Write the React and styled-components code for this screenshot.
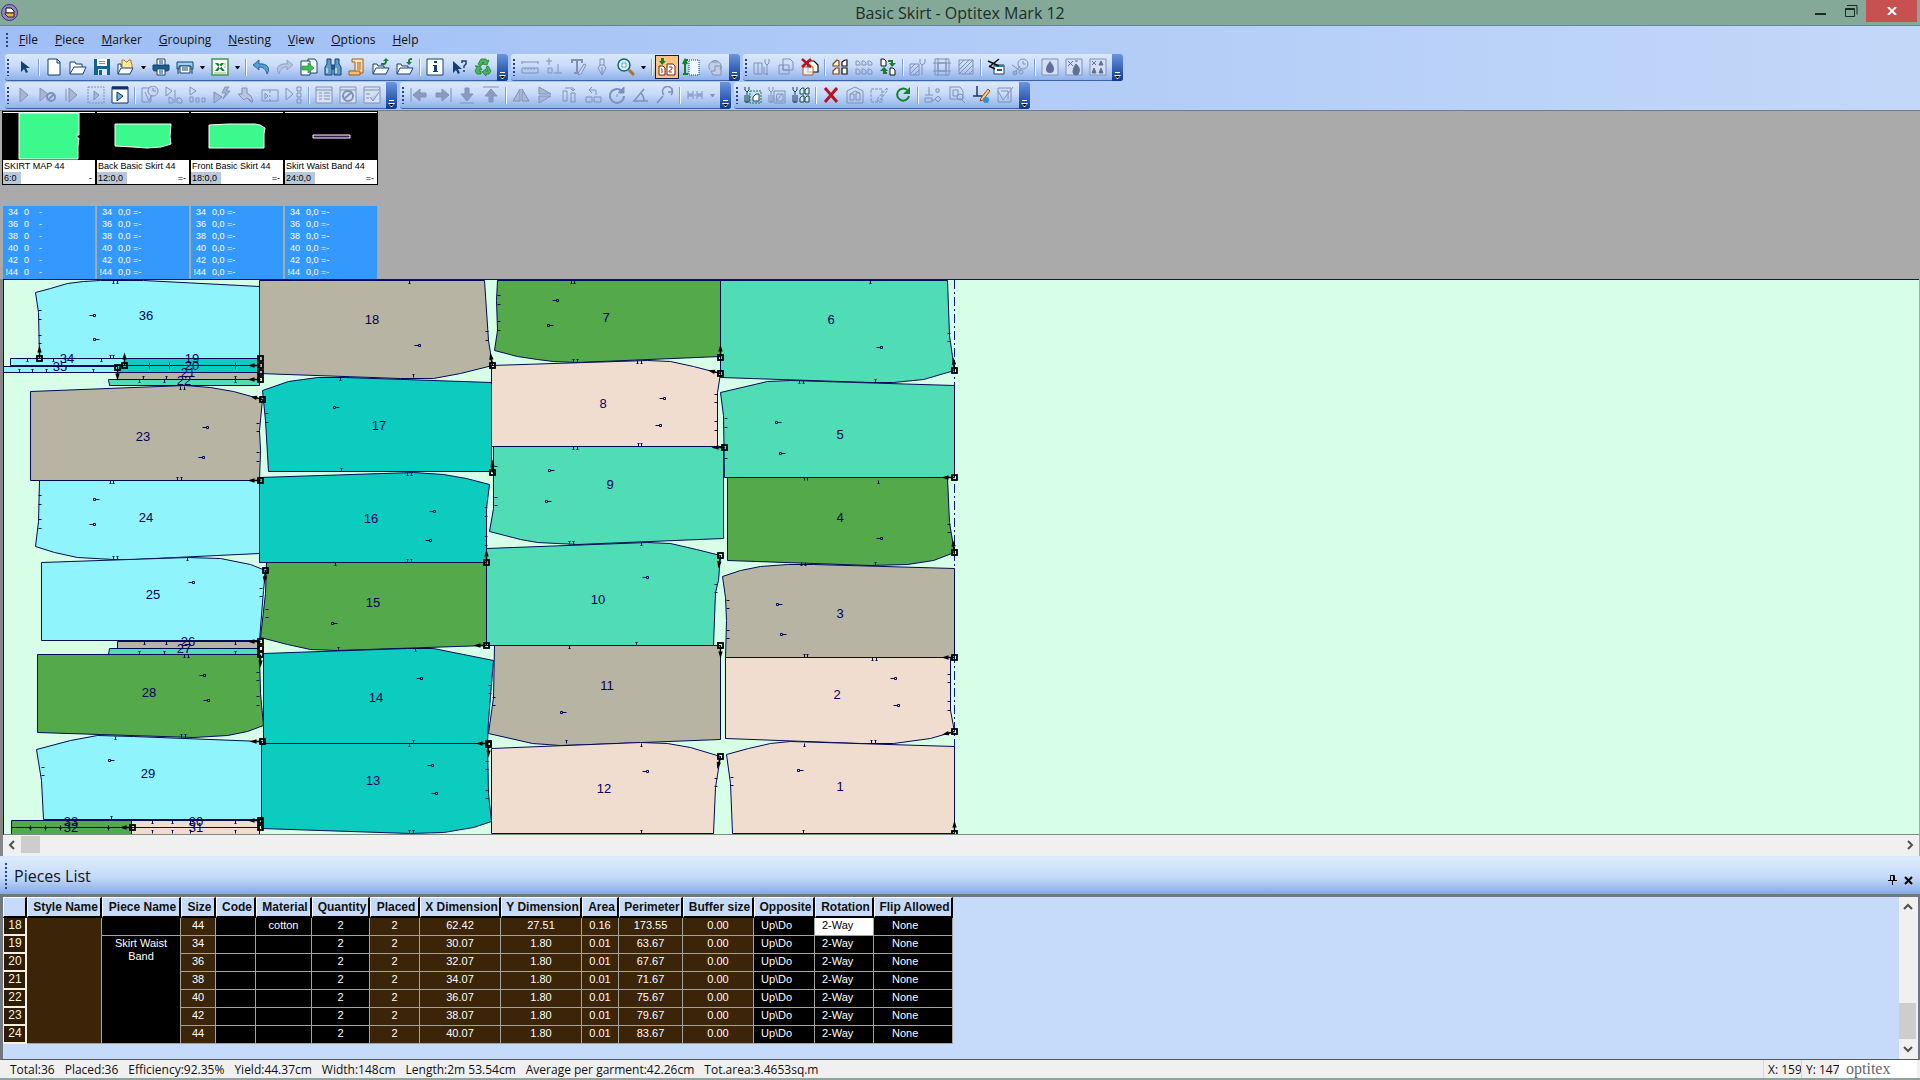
import React from 'react';
import styled, { createGlobalStyle, css } from 'styled-components';

const GlobalStyle = createGlobalStyle`
  * {
    box-sizing: border-box;
  }

  body {
    margin: 0;
    font-family: 'Open Sans', 'Noto Sans', sans-serif;
    color: #111;
  }

  button {
    padding: 0;
    border: none;
    background: transparent;
    color: inherit;
    font: inherit;
  }
`;

const Window = styled.div`
  display: flex;
  flex-direction: column;
  height: 100vh;
  overflow: hidden;
  background: #aaaaaa;
`;

/* Title bar */

const TitleBar = styled.header`
  display: grid;
  grid-template-columns: 1fr auto 1fr;
  flex: none;
  height: 26px;
  background: #85a998;
  border-bottom: 1px solid #62869a;
`;

const AppLogo = styled.svg`
  margin: 4px 0 0 1px;
`;

const Title = styled.h1`
  margin: 0;
  font-size: 16px;
  font-weight: 400;
  line-height: 26px;
  color: #1e2c28;
`;

const WindowButtons = styled.div`
  display: flex;
  justify-content: flex-end;
  padding-right: 3px;
`;

const WindowButton = styled.button`
  display: flex;
  align-items: center;
  justify-content: center;
  width: ${p => (p.$close ? 51 : 30)}px;
  height: 22px;
  color: ${p => (p.$close ? '#fff' : '#1c2a26')};
  background: ${p => (p.$close ? '#c75050' : 'transparent')};
`;

/* Menu and toolbars */

const Bars = styled.div`
  flex: none;
  background: linear-gradient(to right, #9ebef5 0%, #b0cbf7 50%, #c3d8f9 100%);
  border-bottom: 1px solid #77797f;
`;

const Menu = styled.nav`
  display: flex;
  align-items: center;
  gap: 1px;
  height: 28px;
  padding-left: 5px;
`;

const MenuItem = styled.button`
  padding: 0 8px;
  font-size: 12px;
  line-height: 24px;
`;

const Grip = styled.span`
  flex: none;
  width: 3px;
  height: ${p => p.$height || 17}px;
  margin: 0 ${p => p.$gap || 2}px;
  background: repeating-linear-gradient(#27438a 0 2px, transparent 2px 4px);
  background-size: 2px 100%;
  background-repeat: no-repeat;
`;

const ToolRow = styled.div`
  display: flex;
  gap: 3px;
  height: 28px;
  padding-left: 5px;
`;

const Toolbar = styled.div`
  display: flex;
  align-items: center;
  height: 27px;
  border-bottom: 1px solid #3b61a8;
  border-radius: 3px;
  background: linear-gradient(#dbe8fc 0%, #c8dbf9 45%, #8fb1ea 100%);
`;

const ToolButton = styled.button`
  display: flex;
  align-items: center;
  justify-content: center;
  width: 24px;
  height: 24px;
  color: #8090b8;

  ${p =>
    p.$active &&
    css`
      border: 1px solid #101a50;
      background: #fcc583;
    `}
`;

const Drop = styled.button`
  display: flex;
  align-items: center;
  justify-content: center;
  width: 11px;
  height: 24px;
  color: ${p => (p.disabled ? '#8090b8' : '#000')};
`;

const Separator = styled.span`
  width: 6px;
  height: 17px;
  background: linear-gradient(to right, #7f9fd8 1px, #f4f8ff 1px) center / 2px 100% no-repeat;
`;

const Overflow = styled.button`
  display: flex;
  align-items: flex-end;
  justify-content: center;
  width: 11px;
  height: 27px;
  margin-left: 2px;
  padding-bottom: 2px;
  border-radius: 0 3px 3px 0;
  background: linear-gradient(#6b95e0, #0b3a92);
  align-self: flex-start;
`;

/* Piece bar */

const PieceBar = styled.section`
  display: flex;
  flex: none;
  height: 168px;
  padding: 0 2px;
`;

const PieceColumn = styled.div`
  display: flex;
  flex-direction: column;
  justify-content: space-between;
  width: 94px;
  font-family: 'Liberation Sans', Arial, sans-serif;
  font-size: 9px;
  line-height: 12px;
`;

const PieceCard = styled.button`
  display: block;
  width: 94px;
  border: 1px solid #000;
  background: #fff;
  text-align: left;
  color: #000;
`;

const Thumb = styled.svg`
  display: block;
  border-top: 1px solid #fff;
  background: #000;
`;

const PieceTitle = styled.div`
  height: 12px;
  padding-left: 1px;
  white-space: nowrap;
`;

const PieceCount = styled.div`
  display: flex;
  justify-content: space-between;
  height: 12px;
  padding-right: 3px;

  span:first-child {
    padding: 0 4px 0 1px;
    background: #b9c8d9;
  }
`;

const SizeList = styled.ul`
  width: 92px;
  margin: 0 0 0 1px;
  padding: 0 0 1px;
  list-style: none;
  background: #3399ff;
  color: #fff;
`;

const SizeItem = styled.li`
  display: grid;
  grid-template-columns: 21px 15px auto;
  white-space: nowrap;

  span:first-child {
    padding-right: 6px;
    text-align: right;
  }
`;

/* Marker table */

const Table = styled.main`
  display: flex;
  flex-direction: column;
  flex: 1;
  min-height: 0;
  margin-right: 1px;
  border-left: 3px solid #85858a;
`;

const Canvas = styled.div`
  flex: 1;
  min-height: 0;
  overflow: hidden;
  border-left: 1px solid #16163c;
  border-top: 1px solid #16163c;
  border-bottom: 1px solid #7c8a85;
  background: #d7ffe7;

  svg {
    display: block;
    font-family: 'Liberation Sans', Arial, sans-serif;
    font-size: 13px;
  }
`;

const ScrollTrack = styled.div`
  display: flex;
  flex: none;
  flex-direction: ${p => (p.$vertical ? 'column' : 'row')};
  justify-content: space-between;
  width: ${p => (p.$vertical ? '19px' : 'auto')};
  height: ${p => (p.$vertical ? 'auto' : '21px')};
  padding: ${p => (p.$vertical ? '0 2px 1px 0' : '0 1px 2px 0')};
  background: #f0f0f0;
`;

const ScrollButton = styled.button`
  display: flex;
  align-items: center;
  justify-content: center;
  width: 17px;
  height: 19px;
  color: #505050;
`;

const ScrollThumb = styled.div`
  width: ${p => (p.$vertical ? 17 : 19)}px;
  height: ${p => (p.$vertical ? 36 : 17)}px;
  margin: ${p => (p.$vertical ? 'auto 0 0' : '1px auto 0 1px')};
  background: #cdcdcd;
`;

/* Pieces list */

const PanelHeader = styled.div`
  display: flex;
  align-items: center;
  flex: none;
  height: 38px;
  padding-right: 4px;
  border-top: 2px solid #dbe8fc;
  background: linear-gradient(#dcebfd 0%, #c2d9f8 55%, #86a9e4 100%);
  color: #14142a;

  h2 {
    flex: 1;
    margin: 0;
    padding-left: 1px;
    font-size: 16px;
    font-weight: 400;
  }
`;

const PanelButton = styled.button`
  width: 16px;
  height: 16px;
`;

const PanelBody = styled.section`
  display: flex;
  justify-content: space-between;
  flex: none;
  height: 166px;
  border-top: 3px solid #72767e;
  border-left: 3px solid #72767e;
  border-right: 2px solid #72767e;
  border-bottom: 1px solid #55575c;
  background: #c6dbf9;
`;

const List = styled.table`
  align-self: flex-start;
  width: 950px;
  table-layout: fixed;
  border-collapse: separate;
  border-spacing: 0;
  font-family: 'Liberation Sans', Arial, sans-serif;
`;

const HeadCell = styled.th`
  height: 21px;
  padding: 0 0 0 3px;
  border: solid;
  border-width: 1px 2px 2px 1px;
  border-color: #fff #000 #000 #fff;
  background: #c6dbf9;
  font-size: 12px;
  font-weight: 700;
  line-height: 18px;
  white-space: nowrap;
`;

const RowHead = styled.th`
  height: 18px;
  padding: 0;
  border: 1px solid #f8f0dc;
  border-width: 0 1px 1px;
  box-shadow: inset -1px -1px #f8f0dc;
  background: #2c1c08;
  color: #fff3d6;
  font-size: 12px;
  font-weight: 400;
  line-height: 15px;
  vertical-align: top;
`;

const Cell = styled.td`
  height: 18px;
  padding: 1px ${p => (p.$indent ? 0 : 3)}px 1px ${p => p.$indent || 3}px;
  border-right: 1px solid #a5a39e;
  border-bottom: 1px solid #a5a39e;
  background: ${p => (p.$selected ? '#fff' : p.$brown ? '#3b2407' : '#000')};
  color: ${p => (p.$selected ? '#000' : '#fff')};
  font-size: 11px;
  line-height: 13px;
  text-align: ${p => (p.$indent ? 'left' : 'center')};
  vertical-align: top;
`;

const StatusBar = styled.footer`
  display: flex;
  align-items: stretch;
  flex: none;
  height: 20px;
  padding-left: 10px;
  border-bottom: 2px solid #8fa39c;
  background: #f0f0f0;
  font-size: 12px;
  line-height: 20px;
  white-space: nowrap;
`;

const Totals = styled.div`
  display: flex;
  flex: 1;
  gap: 10px;
`;

const Coordinate = styled.span`
  width: 38px;
  padding-left: 4px;
  overflow: hidden;
  border-left: 1px solid #d8d8d8;
`;

const Brand = styled.span`
  width: 78px;
  margin-right: 3px;
  padding-left: 7px;
  background: #fff;
  color: #666;
  font-family: 'Liberation Serif', serif;
  font-size: 16px;
  line-height: 17px;
`;

const NAVY = '#14406f';
const GREEN = '#168030';

// 18 x 18 toolbar glyphs, greyed ones inherit the button colour
const icons = {
  pointer: <path d="M6 3v11l3-3 2 4 2-1-2-4h4z" fill={NAVY} stroke="none" />,
  newFile: <path d="M3 1h9l3 3v13H3zM12 1v4h3" fill="#fff" stroke={NAVY} />,
  open: (
    <g stroke={NAVY} fill="#fff">
      <path d="M1 16V4h5l1 2h6v3" />
      <path d="M1 16l4-7h12l-3 7z" />
    </g>
  ),
  save: (
    <g stroke="none">
      <path d="M1 1h16v16H1z" fill="#16608f" />
      <path d="M4 1h10v7H4z" fill="#fff" />
      <path d="M6 3h6v1H6zM6 5h6v1H6z" fill="#8090a0" />
      <path d="M5 11h9v6H5z" fill="#d7ecff" />
      <path d="M6 12h3v5H6z" fill="#16608f" />
    </g>
  ),
  openStyle: (
    <g>
      <path d="M5 11V2h2l2 2 1 0 2-2h2v3l1 1v5z" fill="#ffe9a0" stroke="#b07a18" />
      <path d="M1 16V6h3v3M1 16l3-6h12l-3 6z" fill="#fff" stroke={NAVY} />
    </g>
  ),
  print: (
    <g stroke={NAVY}>
      <path d="M1 7h16v5l-2 1H3l-2-1z" fill="#16608f" />
      <path d="M5 1h8v6H5zM5 11h8v6H5z" fill="#fff" />
      <path d="M7 3h4M7 5h4M7 13h4M7 15h4" />
    </g>
  ),
  plotter: (
    <g stroke={NAVY}>
      <path d="M1 4h16v7h-2V8H3v3H1z" fill="#9ed0f4" />
      <path d="M4 8h10v7H4z" fill="#fff" />
      <path d="M6 10h6M6 12h6M2 11v5M16 11v5" />
    </g>
  ),
  excel: (
    <g>
      <path d="M1 1h16v16H1z" fill="#fff" stroke="#3a9a4a" strokeWidth="1.5" />
      <path d="M4 5h3l7 8h-3zM13 5h-3L4 13h3z" fill={GREEN} stroke="none" />
      <path d="M13 6h2M13 9h2M3 15h12" stroke="#7cba84" />
    </g>
  ),
  undo: <path d="M7 2L1 7l6 5V9c4 0 7 2 8 7 4-6 0-11-8-10z" fill="#4fa0dc" stroke={NAVY} strokeWidth="0.7" />,
  redo: <path d="M11 2l6 5-6 5V9c-4 0-7 2-8 7-4-6 0-11 8-10z" fill="#b5c4e0" stroke="#8090b8" strokeWidth="0.7" />,
  importFile: (
    <g>
      <path d="M8 1h7l2 3v11H8z" fill="#fff" stroke={NAVY} />
      <path d="M1 3h9v14H1z" fill="#fff" stroke={NAVY} />
      <path d="M2 8h6V5l6 5-6 5v-3H2z" fill="#3cc04c" stroke={GREEN} strokeWidth="0.6" />
    </g>
  ),
  binoculars: (
    <g stroke={NAVY} fill="#5f9bc8">
      <path d="M3 1h4v5l1 3v8H1V9l2-3zM11 1h4v5l2 3v8h-7V9l1-3zM8 7h2v4H8z" />
      <path d="M3 10v5M12 10v5" stroke="#fff" />
    </g>
  ),
  scroll: (
    <g>
      <path d="M4 1h11v14H7V4H4z" fill="#ffe6b8" stroke="#a05a18" />
      <path d="M1 13h11v4H1z" fill="#f3bd72" stroke="#a05a18" />
      <path d="M9 5h4M9 7h4M9 9h4M9 11h4" stroke="#a05a18" />
    </g>
  ),
  folderUp: (
    <g>
      <path d="M1 16V6h4l1 2h6v2M1 16l3-6h13l-3 6z" fill="#fff" stroke={NAVY} />
      <path d="M9 5h2c2 0 2-1 2-2h-2l3-3 3 3h-2c0 3-2 5-6 4z" fill={GREEN} stroke="none" />
    </g>
  ),
  folderDown: (
    <g>
      <path d="M1 16V6h4l1 2h6v2M1 16l3-6h13l-3 6z" fill="#fff" stroke={NAVY} />
      <path d="M16 0v2c-2 0-2 0-2 2h2l-3 3-3-3h2c0-3 1-4 4-4z" fill={GREEN} stroke="none" />
    </g>
  ),
  info: (
    <g>
      <path d="M1 1h16v16H1z" fill="#fff" stroke={NAVY} />
      <path d="M8 3h3v2H8zM7 7h4v6h1v1H7v-1h1V8H7z" fill={NAVY} stroke="none" />
    </g>
  ),
  help: (
    <g>
      <path d="M3 3v12l3-3 2 4 2-1-2-4h4z" fill={NAVY} stroke="none" />
      <path d="M12 5V3h4v3l-2 2v2M14 12v2" stroke={NAVY} strokeWidth="1.5" />
    </g>
  ),
  recycle: (
    <g fill="#49b85a" stroke={GREEN} strokeWidth="0.8">
      <path d="M4 6l3-5h5l1 2 2-1-2 5-5-1 2-1-1-1-2 4z" />
      <path d="M14 8l3 5-2 3h-3v2l-4-4 4-3v2h2l-2-4z" />
      <path d="M7 16H3l-2-3 2-4-2-1h5l2 4-2-1-1 2h2z" />
    </g>
  ),
  ruler: <path d="M1 3v3M17 3v3M1 4h16M1 10h16v5H1zM4 10v2M7 10v2M10 10v2M13 10v2" />,
  align: <path d="M4 0v7M1 3h6M3 10h4v5H3zM9 15h8M13 6v9" />,
  text: (
    <g>
      <path d="M2 1h12v4h-2V3H9v11h2v2H5v-2h2V3H4v2H2z" fill="currentColor" stroke="none" />
      <path d="M17 7l-5 9-3 1 1-3 5-8z" fill="#c8d8f4" />
    </g>
  ),
  pen: <path d="M7 1h4v6l2 3-4 7-4-7 2-3zM9 9v7M7 7h4" />,
  zoom: (
    <g>
      <circle cx="7" cy="7" r="6" fill="#d7f2f7" stroke="#146878" strokeWidth="1.5" />
      <path d="M5 5h4v4H5z" fill="#fff" stroke="#58a6ba" />
      <path d="M12 12l5 5" stroke="#b07028" strokeWidth="3" />
    </g>
  ),
  numbered: (
    <g>
      <path d="M1 8h4l2 2v7H1zM9 6h6l2 2v9H9z" fill="#fff" stroke="#6a2410" />
      <path d="M3 11h1v4M11 9h3v2l-3 2v1h3" stroke="#c0260e" />
      <path d="M3 0h3v3h2L4 7 1 3h2z" fill={GREEN} stroke="none" />
    </g>
  ),
  bounds: (
    <g>
      <path d="M7 2h10v15H7z" fill="#eff8ff" stroke={NAVY} strokeDasharray="1 1" />
      <path d="M3 3v13M1 6l2-4 2 4M3 2h3M1 16h5" stroke={GREEN} strokeWidth="2" />
    </g>
  ),
  roll: <path d="M4 12a6 6 0 1 1 10 0M9 8h6v9H7l-2-4h4zM6 4h6" fill="#c3cee6" />,
  pieceWrench: <path d="M1 5h8v11H1zM5 5v11M12 1v4l2 2 2-2V1M14 7v10M11 9v7h4" />,
  overlap: <path d="M6 1h7l3 3v8H6zM2 7h10v9H2zM6 7v5h6" />,
  overlapDelete: (
    <g>
      <path d="M7 3h6l4 4v7H7z" fill="#fffbe8" stroke="#111" strokeWidth="1.2" />
      <path d="M2 9h10v8H2z" fill="#fff" fillOpacity="0.7" stroke="#b06018" />
      <path d="M1 1l9 8M10 1L1 9" stroke="#c01020" strokeWidth="2.5" />
    </g>
  ),
  quad: (
    <g strokeWidth="1.2">
      <path d="M6 2l2 1v5H2V6zM2 16v-3l3-3h3v6z" fill="#fffbe8" stroke="#8a3c10" />
      <path d="M11 4l3-2h2v6h-5zM11 10h5v6h-5z" fill="#fff" stroke="#111" />
    </g>
  ),
  six: <path d="M1 3h2l2 2v2H1zM7 3h2l2 2v2H7zM13 3h2l2 2v2h-4zM1 11h2l2 2v3H1zM7 11h2l2 2v3H7zM13 11h2l2 2v3h-4z" />,
  swap: (
    <g>
      <path d="M2 1h3l2 2v5H2zM11 10h3l2 2v5h-5z" fill="#fff" stroke="#111" />
      <path d="M9 2h5v3h3l-4 4-3-4h2V4H9zM8 16H4v-3H1l4-4 4 4H7v1h1z" fill={GREEN} stroke="none" />
    </g>
  ),
  hatchWrench: <path d="M1 6h9v11H1zM1 11l5-5M1 16l9-9M5 17l5-5M11 1v4l2 2 3-2V1M13 7v10" />,
  hatchFrame: <path d="M2 1h14v16H2zM5 5h8v8H5zM0 5h18M0 13h18M5 0v18M13 0v18" />,
  hatch: <path d="M2 2h14v14H2zM2 7l5-5M2 12L12 2M2 16L16 2M7 16l9-9M12 16l4-4" />,
  scissors: (
    <g>
      <path d="M7 7h10v9H7z" fill="#fff" stroke={NAVY} />
      <path d="M8 8h9" stroke="#1685ab" strokeWidth="2" />
      <path d="M1 3l11 5M12 1L2 9M2 8l6 3M10 12h5" stroke="#111" strokeWidth="1.5" />
    </g>
  ),
  scissorsClock: (
    <g>
      <circle cx="12" cy="6" r="5" />
      <path d="M12 3v3h3M1 7l9 6M9 8L3 16" />
      <circle cx="4" cy="15" r="2" />
      <circle cx="10" cy="14" r="2" />
    </g>
  ),
  drop: (
    <g>
      <path d="M1 1h16v16H1z" fill="#d5def2" />
      <path d="M9 3c3 4 4 6 4 8a4 4 0 0 1-8 0c0-2 1-4 4-8z" fill="#5d6f9b" stroke="none" />
    </g>
  ),
  dropCross: (
    <g>
      <path d="M1 1h16v16H1z" fill="#d5def2" />
      <path d="M11 6c3 3 4 5 3 8a3 3 0 0 1-6 0c0-3 1-5 3-8zM3 3l5 5M8 3L3 8M10 3h3" fill="#5d6f9b" stroke="#5d6f9b" />
    </g>
  ),
  drops: (
    <g>
      <path d="M1 1h16v16H1z" fill="#d5def2" />
      <path d="M3 3l4 4M7 3L3 7M12 3l2 4h-4zM5 10l2 5H3zM12 10l2 5h-4z" fill="#5d6f9b" stroke="#5d6f9b" />
    </g>
  ),
  play: <path d="M5 2l8 7-8 7z" fill="#a9b7d6" />,
  playStop: (
    <g>
      <path d="M1 2l8 6-8 7z" fill="#a9b7d6" />
      <circle cx="12" cy="11" r="4" strokeWidth="2" />
      <path d="M9 14l6-6" strokeWidth="2" />
    </g>
  ),
  playStep: <path d="M3 3v12M6 2l8 7-8 7z" fill="#a9b7d6" />,
  playBox: (
    <g>
      <path d="M1 1h16v16H1z" strokeDasharray="2 1" />
      <path d="M7 5l5 4-5 5z" fill="#a9b7d6" />
    </g>
  ),
  playWindow: (
    <g>
      <path d="M1 1h16v16H1z" fill="#fff" stroke="#0d3460" />
      <path d="M1 2h16" stroke="#0d3460" strokeWidth="3" />
      <path d="M6 6l6 4-6 5z" fill="#67b7e5" stroke="#0d3460" />
    </g>
  ),
  fileClock: (
    <g>
      <path d="M1 2h9v14H1zM4 6l4 9 2-5" />
      <circle cx="12" cy="5" r="5" fill="#c8d6f2" />
      <path d="M12 2v3h3" />
    </g>
  ),
  playSizes: <path d="M1 1l6 4-6 5zM4 11v6h4v-4zM10 4v13M12 12h3l2 2v3h-5z" />,
  playRow: <path d="M1 1l6 4-6 4zM1 11h3v5H1zM7 12h3v4H7zM13 12h3v4h-3z" />,
  playFlash: <path d="M1 6l8 5-8 6zM12 1l-3 6h4l-3 6 7-8h-4l3-4z" fill="#a9b7d6" />,
  shapes: <path d="M5 2h5v5l4 3 2 6-6-4-3 2-6-6h4zM10 12l5 5" fill="#b9c6e0" />,
  playFrame: <path d="M1 4h16v11H1zM9 4v3M9 9v2M9 13v2M4 7l3 3-3 3z" />,
  playStack: <path d="M1 2l7 6-7 6zM12 1h4v4h-4zM12 7h4v4h-4zM12 13h4v4h-4z" />,
  sheet: <path d="M1 1h16v16H1zM1 4h16M4 7h3M9 7h6M4 10h3M9 10h6M4 13h3M9 13h6" fill="#d7e1f4" />,
  sheetStop: (
    <g>
      <path d="M1 1h16v16H1zM1 4h16" fill="#d7e1f4" />
      <circle cx="9" cy="10" r="5" strokeWidth="2" />
      <path d="M5 13l8-7" strokeWidth="2" />
    </g>
  ),
  sheetCheck: <path d="M1 1h16v16H1zM1 4h16M3 8h4M3 12h3M7 11l3 4 6-9" fill="#d7e1f4" />,
  left: <path d="M1 2v14M16 7h-6V3L3 9l7 6v-4h6z" fill="#8c9abd" />,
  right: <path d="M17 2v14M2 7h6V3l7 6-7 6v-4H2z" fill="#8c9abd" />,
  down: <path d="M2 17h14M7 2v6H3l6 7 6-7h-4V2z" fill="#8c9abd" />,
  up: <path d="M1 1h16M7 16v-6H3l6-7 6 7h-4v6z" fill="#8c9abd" />,
  mirrorH: <path d="M8 3v12H1zM10 3v12h7z" fill="#a9b7d6" />,
  mirrorV: <path d="M3 1l12 7H3zM3 10h12L3 17z" fill="#a9b7d6" />,
  rotateL: <path d="M3 5h4v10H3zM11 7h4v9h-4zM5 2h8v3M11 3l2 2 2-2" />,
  rotateR: <path d="M2 11h6v5H2zM10 11h7v5h-7zM12 9V4H6M8 1L5 4l3 3" />,
  rotate: (
    <g>
      <path d="M14 5a7 7 0 1 0 2 5" strokeWidth="2" />
      <path d="M16 1v6h-6zM9 8v3" fill="currentColor" />
    </g>
  ),
  angle: <path d="M12 3L2 15h14M9 7c2 2 3 4 3 8" strokeWidth="1.5" />,
  rotateTo: <path d="M1 17l6-7M8 9a5 5 0 1 1 7 0M16 2v4h-4" strokeWidth="1.5" />,
  spread: <path d="M1 9h16M2 5v3h5V5M2 13v-3h5v3M11 5v3h5V5M11 13v-3h5v3" />,
  nestTool: (
    <g>
      <path d="M6 5h11v12H6z" stroke={GREEN} strokeDasharray="2 1" />
      <path d="M9 15v-4l3-3h3v7z" fill="#fff" stroke="#174258" />
      <path d="M1 1v3l2 2 2-2V1M3 6v11M1 9v7h4V9" stroke="#174258" />
    </g>
  ),
  nestToolOff: <path d="M6 5h11v12H6zM9 8h6v7H8zM1 1v3l2 2 2-2V1M3 6v11M1 9v7h4V9M9 14l5-6" />,
  nestAll: (
    <g>
      <path d="M8 8V4l2-2h2v6zM13 8V4l2-2h2v6zM8 16v-4l2-2h2v6zM13 16v-4l2-2h2v6z" fill="#d6f4dc" stroke="#174258" />
      <path d="M1 1v3l2 2 2-2V1M3 6v11M1 9v7h4V9" stroke="#174258" />
    </g>
  ),
  remove: <path d="M3 2l12 14M15 2L3 16" stroke="#b41428" strokeWidth="3" />,
  house: <path d="M1 5l8-4 8 4v12H1zM4 8h4v6H4zM10 7h4v7h-4zM4 8l5-3 5 2" />,
  editPiece: <path d="M1 3h11v13H1zM17 2L8 12l-1 3 3-1 7-9z" strokeDasharray="3 1" />,
  refresh: (
    <g>
      <path d="M13 4a6 6 0 1 0 2 6" stroke={GREEN} strokeWidth="2" />
      <path d="M16 1v7H9z" fill={GREEN} stroke="none" />
    </g>
  ),
  joints: <path d="M5 1v8M1 9h8M1 12h7v4H1zM12 3h3v3h-3zM11 13l3-3 3 3-3 3zM8 14h3" />,
  pieceSearch: <path d="M2 1h10l3 4v8H2zM5 4h5v6H5zM9 11a3 3 0 1 1 6 0 3 3 0 1 1-6 0M14 14l3 3" />,
  axis: (
    <g>
      <path d="M5 0v10M1 10h11" stroke="#143c70" strokeWidth="1.5" />
      <path d="M16 3l-7 9-1 3 3-1 7-9z" fill="#ffcf70" stroke="#9a4a18" />
      <circle cx="14" cy="14" r="3" fill="#2d8fe0" stroke="none" />
    </g>
  ),
  check: <path d="M2 2h13v14H2zM2 5l5 9L17 1M5 5h7v8" />,
};

const disabled = new Set(
  `redo ruler align text pen roll pieceWrench overlap six hatchWrench hatchFrame hatch scissorsClock
  drop dropCross drops play playStop playStep playBox fileClock playSizes playRow playFlash shapes
  playFrame playStack sheet sheetStop sheetCheck left right down up mirrorH mirrorV rotateL rotateR
  rotate angle rotateTo spread nestToolOff house editPiece joints pieceSearch check`.split(/\s+/)
);

// "|" is a separator, "v" a drop-down arrow and "x" a greyed one
const toolRows = [
  [
    'pointer | newFile open save openStyle v print plotter v excel v | undo redo importFile binoculars scroll folderUp folderDown | info help recycle',
    'ruler align text pen zoom v | numbered bounds roll',
    'pieceWrench overlap overlapDelete | quad six swap | hatchWrench hatchFrame hatch | scissors scissorsClock | drop dropCross drops'
  ],
  [
    'play playStop playStep playBox playWindow | fileClock playSizes playRow playFlash shapes playFrame playStack | sheet sheetStop sheetCheck',
    'left right down up | mirrorH mirrorV rotateL rotateR rotate angle rotateTo | spread x',
    'nestTool nestToolOff nestAll | remove house editPiece refresh | joints pieceSearch axis check'
  ]
];

const menu = ['File', 'Piece', 'Marker', 'Grouping', 'Nesting', 'View', 'Options', 'Help'];

const sizes = ['34', '36', '38', '40', '42', '!44'];

const cards = [
  { name: 'SKIRT MAP 44', count: '6:0', tail: '-', shape: 'M16 0h60v22h-2v3h2l-1 8v13H16z' },
  { name: 'Back Basic Skirt 44', count: '12:0,0', tail: '=-', shape: 'M18 11h56l-1 13 1 7-10 3-14 1-14-1-18-1z' },
  { name: 'Front Basic Skirt 44', count: '18:0,0', tail: '=-', shape: 'M18 12l19-1 27 0 5 1 5 3-1 6v14H18z' },
  { name: 'Skirt Waist Band 44', count: '24:0,0', tail: '=-', shape: 'M28 22h37v3H28z' }
];

const CYAN = '#8ff4fc';
const TAUPE = '#b8b4a4';
const TEAL = '#0cccc0';
const LEAF = '#54a94a';
const PEACH = '#f0ddd0';
const MINT = '#50dcb4';

// [label, fill, label x, label y, outline]
const pieces = [
  [36, CYAN, 146, 316, '35,292 50,288 67,283 83,281 100,280 143,280 259,286 259,358 39,358 38,312'],
  [18, TAUPE, 372, 320, '259,280 484,280 488,340 492,365 460,373 433,378 400,378 259,373'],
  [7, LEAF, 606, 318, '497,280 720,280 720,356 577,362 553,361 537,359 517,356 494,350 497,330 496,300'],
  [6, MINT, 831, 320, '720,280 947,280 949,335 954,370 923,379 893,382 870,382 720,377'],
  [34, CYAN, 67, 359, '10,358 124,358 124,365 10,365'],
  [35, CYAN, 60, 367, '3,366 117,366 117,372 3,372'],
  [19, TEAL, 192, 359, '124,358 259,358 259,365 124,365'],
  [20, TEAL, 192, 366, '117,365 259,365 259,372 117,372'],
  [21, TAUPE, 188, 373, '117,372 259,372 259,379 117,379'],
  [22, MINT, 184, 381, '108,379 259,379 259,385 109,385'],
  [23, TAUPE, 143, 437, '30,391 185,385 210,387 233,391 262,399 259,430 260,450 259,480 30,480'],
  [17, TEAL, 379, 426, '262,390 288,381 317,377 345,377 491,382 491,471 268,471 265,420'],
  [8, PEACH, 603, 404, '491,365 647,360 670,361 693,366 720,373 717,392 717,446 491,446'],
  [5, MINT, 840, 435, '720,392 767,381 790,380 954,385 954,477 724,477 723,415'],
  [24, CYAN, 146, 518, '39,480 259,480 259,553 133,559 113,559 77,557 54,552 35,546 38,521'],
  [16, TEAL, 371, 519, '259,477 413,472 443,474 466,478 489,484 486,508 486,562 259,562'],
  [9, MINT, 610, 485, '493,446 723,446 723,538 577,544 537,542 520,539 489,531 493,508'],
  [4, LEAF, 840, 518, '727,477 947,477 949,522 954,552 933,560 907,564 870,565 727,560'],
  [25, CYAN, 153, 595, '41,562 187,557 220,558 250,564 265,570 263,590 259,640 41,640'],
  [15, LEAF, 373, 603, '266,562 486,562 486,645 337,650 310,649 287,644 260,637 265,593'],
  [10, MINT, 598, 600, '486,548 647,542 670,543 696,549 720,555 718,580 715,592 713,645 486,645'],
  [3, TAUPE, 840, 614, '722,576 740,570 760,566 787,564 813,564 954,568 954,657 725,657 726,620 725,597'],
  [26, TAUPE, 188, 642, '117,641 259,641 259,648 117,648'],
  [27, MINT, 184, 649, '109,648 259,648 259,654 108,654'],
  [28, LEAF, 149, 693, '37,654 259,654 260,693 263,725 247,731 227,735 193,737 37,732'],
  [14, TEAL, 376, 698, '263,653 407,648 433,648 493,660 488,720 487,743 263,743'],
  [11, TAUPE, 607, 686, '494,645 720,645 720,739 590,744 560,745 532,743 488,733 493,697'],
  [2, PEACH, 837, 695, '725,657 950,657 950,710 954,731 930,738 893,743 860,743 725,738'],
  [29, CYAN, 148, 774, '36,749 70,740 97,735 133,736 261,741 261,819 43,819 41,780'],
  [13, TEAL, 373, 781, '261,743 487,743 488,793 491,821 473,827 443,832 410,833 261,828'],
  [12, PEACH, 604, 789, '491,748 640,742 667,743 690,747 720,756 715,787 713,833 491,833'],
  [1, PEACH, 840, 787, '726,754 748,748 770,743 790,741 954,746 954,833 732,833 730,783'],
  [33, LEAF, 71, 822, '11,820 131,820 131,827 11,827'],
  [32, LEAF, 71, 828, '11,827 131,827 131,834 11,834'],
  [30, PEACH, 196, 822, '131,820 259,820 259,827 131,827'],
  [31, PEACH, 196, 828, '131,827 259,827 259,834 131,834']
];

// origin squares, with the arrow's angle (null for a square alone)
const origins = [
  [39, 358, 0], [117, 367, 180], [124, 365, 0], [260, 358, null], [260, 365, -90], [260, 372, null],
  [260, 379, -90], [262, 399, -75], [260, 480, -90], [492, 365, -10], [492, 472, 0], [486, 562, 0],
  [265, 570, 185], [260, 641, -90], [260, 648, null], [260, 654, 180], [262, 741, -90], [488, 743, -90],
  [488, 744, 180], [486, 645, -90], [132, 827, -90], [260, 820, -90], [260, 827, null], [720, 357, 0],
  [720, 373, -75], [724, 447, -90], [720, 555, 190], [720, 645, 180], [720, 756, 195], [954, 370, -5],
  [954, 477, -90], [954, 552, -8], [954, 657, -90], [954, 731, -105], [954, 833, 0]
];

// drill marks, 1 for the loop on the right and -1 on the left
const drills = [
  [92, 315, 1], [96, 339, -1], [205, 427, 1], [201, 457, 1], [96, 499, -1], [92, 524, 1], [336, 407, -1],
  [417, 345, 1], [432, 511, 1], [428, 540, 1], [191, 582, 1], [334, 623, -1], [419, 678, 1], [202, 675, 1],
  [206, 700, 1], [111, 760, -1], [430, 765, 1], [434, 793, 1], [555, 300, 1], [550, 325, -1], [662, 398, 1],
  [658, 425, 1], [551, 470, -1], [548, 501, -1], [645, 577, 1], [563, 712, -1], [645, 771, 1], [879, 347, 1],
  [778, 422, -1], [782, 453, -1], [879, 538, 1], [779, 604, -1], [783, 634, -1], [893, 678, 1],
  [896, 705, 1], [800, 770, -1]
];

// notches grouped by edge: [y, direction, x positions]
const notches = [
  [280, 1, [113, 117, 409, 571, 574, 870]],
  [358, -1, [110, 113]],
  [358, 1, [27, 53, 101]],
  [362, 1, [149, 169, 235]],
  [368, -1, [149, 169, 235]],
  [372, -1, [19, 32, 46, 93]],
  [379, -1, [143, 166, 235]],
  [379, 1, [139, 164, 235]],
  [386, 1, [180, 184]],
  [377, -1, [413]],
  [377, 1, [340]],
  [362, -1, [573, 577]],
  [360, 1, [637, 641]],
  [382, -1, [875]],
  [380, 1, [799, 803]],
  [446, -1, [638, 641]],
  [446, 1, [573, 577]],
  [471, -1, [341]],
  [472, 1, [407, 411]],
  [480, -1, [177, 181, 804, 807]],
  [480, 1, [110, 113, 878]],
  [544, -1, [569, 573]],
  [542, 1, [641]],
  [559, -1, [113, 117]],
  [557, 1, [187]],
  [562, -1, [407, 411]],
  [562, 1, [335, 801, 805]],
  [565, -1, [875]],
  [641, 1, [144, 166, 235]],
  [654, -1, [139, 164, 235]],
  [654, 1, [184, 188]],
  [645, 1, [569]],
  [645, -1, [636]],
  [650, -1, [338]],
  [648, 1, [415]],
  [657, -1, [804, 807]],
  [657, 1, [872, 876]],
  [737, -1, [181, 185]],
  [736, 1, [115]],
  [743, -1, [413, 871, 875, 566]],
  [743, 1, [409, 641, 804]],
  [819, -1, [111]],
  [820, 1, [152, 172, 190, 235]],
  [825, 1, [30, 45, 60, 108]],
  [830, -1, [30, 45, 60, 108]],
  [833, -1, [152, 172, 190, 235, 409, 413, 641, 803]]
];

// side ticks: [x, direction, y positions]
const ticks = [
  [38, 1, [310, 319, 335, 343, 495, 504, 519, 528]],
  [259, -1, [423, 431, 452, 461, 672, 680, 696, 705]],
  [265, 1, [413, 422, 609, 617]],
  [488, -1, [331, 340, 761, 769, 790, 798]],
  [487, -1, [507, 516, 536, 545]],
  [262, -1, [588, 596]],
  [41, 1, [767, 775]],
  [491, -1, [685, 693]],
  [497, 1, [295, 304, 321, 330]],
  [717, -1, [394, 402, 421, 430, 584, 592, 778, 786]],
  [494, 1, [466, 497, 505]],
  [724, 1, [418, 427, 458]],
  [950, -1, [333, 341, 524, 532, 674, 682, 701, 710]],
  [726, 1, [600, 608, 630, 638]],
  [730, 1, [777, 785]],
  [492, 1, [697, 705]]
];

const columns = [
  ['', 24], ['Style Name', 75], ['Piece Name', 79], ['Size', 35], ['Code', 40], ['Material', 56],
  ['Quantity', 58], ['Placed', 50], ['X Dimension', 81], ['Y Dimension', 81], ['Area', 37],
  ['Perimeter', 64], ['Buffer size', 71], ['Opposite', 61], ['Rotation', 59], ['Flip Allowed', 79]
];

const rows = [
  { id: 18, size: 44, material: 'cotton', x: '62.42', y: '27.51', area: '0.16', perimeter: '173.55' },
  { id: 19, size: 34, x: '30.07', y: '1.80', area: '0.01', perimeter: '63.67' },
  { id: 20, size: 36, x: '32.07', y: '1.80', area: '0.01', perimeter: '67.67' },
  { id: 21, size: 38, x: '34.07', y: '1.80', area: '0.01', perimeter: '71.67' },
  { id: 22, size: 40, x: '36.07', y: '1.80', area: '0.01', perimeter: '75.67' },
  { id: 23, size: 42, x: '38.07', y: '1.80', area: '0.01', perimeter: '79.67' },
  { id: 24, size: 44, x: '40.07', y: '1.80', area: '0.01', perimeter: '83.67' }
];

const totals = [
  'Total:36',
  'Placed:36',
  'Efficiency:92.35%',
  'Yield:44.37cm',
  'Width:148cm',
  'Length:2m 53.54cm',
  'Average per garment:42.26cm',
  'Tot.area:3.4653sq.m'
];

const Chevron = ({ d }) => (
  <svg width="10" height="10" viewBox="0 0 10 10" fill="none" stroke="currentColor" strokeWidth="2">
    <path d={d} />
  </svg>
);

const Tool = ({ name }) => {
  if (name === '|') return <Separator />;
  if (name === 'v' || name === 'x') {
    return (
      <Drop aria-label="More" disabled={name === 'x'}>
        <svg width="5" height="3">
          <path d="M0 0h5L3 3H2z" fill="currentColor" />
        </svg>
      </Drop>
    );
  }
  return (
    <ToolButton aria-label={name} disabled={disabled.has(name)} $active={name === 'numbered'}>
      <svg width="18" height="18" viewBox="0 0 18 18" fill="none" stroke="currentColor">
        {icons[name]}
      </svg>
    </ToolButton>
  );
};

const Marker = () => (
  <svg width="956" height="554" viewBox="4 280 956 554">
    <path d="M954.5 280v554" stroke="#0a1a80" strokeDasharray="9 3 2 3" />
    <g stroke="#000a58">
      {pieces.map(([id, fill, , , points]) => (
        <polygon key={id} points={points} fill={fill} transform="translate(0.5 0.5)" />
      ))}
    </g>
    <g stroke="#000a58" fill="none" transform="translate(0.5 0.5)">
      {notches.map(([y, dir, xs], i) => (
        <path key={i} d={xs.map(x => `M${x} ${y}v${dir * 3}M${x - 1} ${y + dir * 3}h2`).join('')} />
      ))}
      {ticks.map(([x, dir, ys], i) => (
        <path key={i} d={ys.map(y => `M${x} ${y}h${dir * 3}`).join('')} />
      ))}
      {drills.map(([x, y, dir], i) => (
        <path key={i} d={`M${x - dir * 3} ${y}h${dir * 4}M${x + dir} ${y - 1}h${dir * 2}v2h${dir * -2}z`} />
      ))}
    </g>
    {origins.map(([x, y, angle], i) => (
      <g key={i} transform={`translate(${x + 0.5} ${y + 0.5})`}>
        <rect x="-2.5" y="-2.5" width="5" height="5" fill="none" stroke="#000" strokeWidth="1.8" />
        {angle !== null && (
          <path d="M-.7 0V-6H-2.2L0-13 2.2-6H.7V0z" fill="#000" transform={`rotate(${angle})`} />
        )}
      </g>
    ))}
    <g fill="#00005c" textAnchor="middle">
      {pieces.map(([id, , x, y]) => (
        <text key={id} x={x} y={y + 4}>
          {id}
        </text>
      ))}
    </g>
  </svg>
);

const PiecesTable = () => (
  <List>
    <colgroup>
      {columns.map(([name, width]) => (
        <col key={name} width={width} />
      ))}
    </colgroup>
    <thead>
      <tr>
        {columns.map(([name]) => (
          <HeadCell key={name}>{name}</HeadCell>
        ))}
      </tr>
    </thead>
    <tbody>
      {rows.map((row, i) => (
        <tr key={row.id}>
          <RowHead>{row.id}</RowHead>
          {i === 0 && <Cell $brown rowSpan={7} />}
          {i === 0 && <Cell />}
          {i === 1 && <Cell rowSpan={6}>Skirt Waist Band</Cell>}
          <Cell $brown>{row.size}</Cell>
          <Cell />
          <Cell>{row.material}</Cell>
          <Cell>2</Cell>
          <Cell $brown>2</Cell>
          <Cell $brown>{row.x}</Cell>
          <Cell $brown>{row.y}</Cell>
          <Cell $brown>{row.area}</Cell>
          <Cell $brown>{row.perimeter}</Cell>
          <Cell $brown>0.00</Cell>
          <Cell $indent={7}>Up\Do</Cell>
          <Cell $indent={7} $selected={i === 0}>
            2-Way
          </Cell>
          <Cell $indent={18}>None</Cell>
        </tr>
      ))}
    </tbody>
  </List>
);

const App = () => (
  <Window>
    <GlobalStyle />
    <TitleBar>
      <AppLogo width="17" height="17" viewBox="0 0 17 17">
        <circle cx="8.5" cy="8.5" r="8" fill="#8f86c8" stroke="#3a3076" />
        <path d="M5 8V4h5l3 3v2H5z" fill="#fff" stroke="#111" />
        <path d="M4 9h9v4H7l-3-3z" fill="#f0b040" stroke="#3c2a10" />
      </AppLogo>
      <Title>Basic Skirt - Optitex Mark 12</Title>
      <WindowButtons>
        <WindowButton aria-label="Minimize">
          <svg width="12" height="12">
            <path d="M0 8h11v2H0z" fill="currentColor" />
          </svg>
        </WindowButton>
        <WindowButton aria-label="Restore">
          <svg width="13" height="13" fill="none" stroke="currentColor">
            <path d="M.5 3.5h9v8h-9zM0 4.5h10M2 .5h10v9" />
          </svg>
        </WindowButton>
        <WindowButton $close aria-label="Close">
          <svg width="10" height="8" stroke="currentColor" strokeWidth="2">
            <path d="M1 0l8 8M9 0L1 8" />
          </svg>
        </WindowButton>
      </WindowButtons>
    </TitleBar>
    <Bars>
      <Menu>
        <Grip $height={15} $gap={1} />
        {menu.map(item => (
          <MenuItem key={item}>
            <u>{item[0]}</u>
            {item.slice(1)}
          </MenuItem>
        ))}
      </Menu>
      {toolRows.map((bars, i) => (
        <ToolRow key={i}>
          {bars.map(bar => (
            <Toolbar key={bar} role="toolbar">
              <Grip />
              {bar.split(' ').map((name, k) => (
                <Tool key={k} name={name} />
              ))}
              <Overflow aria-label="Toolbar options">
                <svg width="7" height="7">
                  <path d="M1 0h5v1H1zM0 3h7L4 7H3z" fill="#fff" />
                  <path d="M1 4h5L4 6H3z" fill="#000" />
                </svg>
              </Overflow>
            </Toolbar>
          ))}
        </ToolRow>
      ))}
    </Bars>
    <PieceBar>
      {cards.map(card => (
        <PieceColumn key={card.name}>
          <PieceCard>
            <Thumb width="92" height="48">
              <path d={card.shape} fill={card.count === '24:0,0' ? '#3c1458' : '#3cf98c'} stroke="#fff" />
            </Thumb>
            <PieceTitle>{card.name}</PieceTitle>
            <PieceCount>
              <span>{card.count}</span>
              <span>{card.tail}</span>
            </PieceCount>
          </PieceCard>
          <SizeList>
            {sizes.map(size => (
              <SizeItem key={size}>
                <span>{size}</span>
                <span>{card.tail === '=-' ? '0,0' : '0'}</span>
                <span>{card.tail}</span>
              </SizeItem>
            ))}
          </SizeList>
        </PieceColumn>
      ))}
    </PieceBar>
    <Table>
      <Canvas>
        <Marker />
      </Canvas>
      <ScrollTrack>
        <ScrollButton aria-label="Scroll left">
          <Chevron d="M7 1L3 5l4 4" />
        </ScrollButton>
        <ScrollThumb />
        <ScrollButton aria-label="Scroll right">
          <Chevron d="M3 1l4 4-4 4" />
        </ScrollButton>
      </ScrollTrack>
    </Table>
    <PanelHeader>
      <Grip $height={27} $gap={5} />
      <h2>Pieces List</h2>
      <PanelButton aria-label="Pin">
        <svg width="9" height="11" fill="none" stroke="#000">
          <path d="M2.5 6V1.5h4V6M5.5 1v5M0 6.5h9M4.5 7v4" />
        </svg>
      </PanelButton>
      <PanelButton aria-label="Close panel">
        <svg width="9" height="9" stroke="#000" strokeWidth="2">
          <path d="M1 1l7 7M8 1L1 8" />
        </svg>
      </PanelButton>
    </PanelHeader>
    <PanelBody>
      <PiecesTable />
      <ScrollTrack $vertical>
        <ScrollButton aria-label="Scroll up">
          <Chevron d="M1 7l4-4 4 4" />
        </ScrollButton>
        <ScrollThumb $vertical />
        <ScrollButton aria-label="Scroll down">
          <Chevron d="M1 3l4 4 4-4" />
        </ScrollButton>
      </ScrollTrack>
    </PanelBody>
    <StatusBar>
      <Totals>
        {totals.map(total => (
          <span key={total}>{total}</span>
        ))}
      </Totals>
      <Coordinate>X: 159</Coordinate>
      <Coordinate>Y: 147</Coordinate>
      <Brand>optitex</Brand>
    </StatusBar>
  </Window>
);

export default App;
